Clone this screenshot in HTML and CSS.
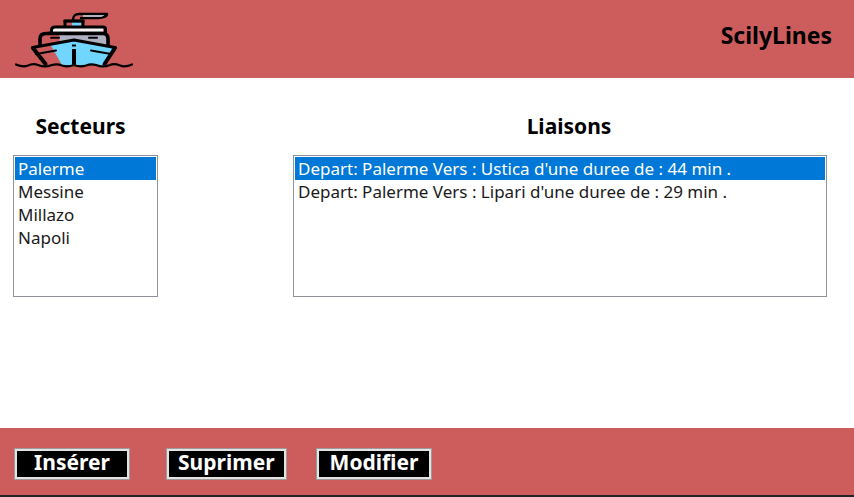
FILE: index.html
```html
<!DOCTYPE html>
<html lang="fr">
<head>
<meta charset="utf-8">
<title>ScilyLines</title>
<link rel="stylesheet" href="styles.css">
</head>
<body>
<header class="banner">
  <svg class="logo" viewBox="0 0 120 58" aria-hidden="true">
    <path fill="#b0b1c2" d="M45 22H90Q94 22 94 26V35L60 28 46 31Z"/>
    <path fill="#f5f3f5" d="M39 15H89V20H39Z"/>
    <path fill="#70d6ff" d="M58 9H67V14H58ZM60 28L100 35 90 53H48L36 32Z"/>
    <path fill="#f2effa" d="M69 3H92Q90 6 81 6H69Z"/>
    <g fill="none" stroke="#000" stroke-linejoin="round">
      <path stroke-width="2.4" stroke-linecap="round" d="M59 8Q59 2 65 2H93Q93 4 90 5Q88 6 84 6H67"/>
      <path stroke-width="3" d="M51 15V9H69V15"/>
      <path stroke-width="2.6" d="M49.5 9H70.5"/>
      <path stroke-width="3" d="M37.500 21V18Q37.500 15 41 15H89Q91.500 15 91.500 17V21"/>
      <path stroke-width="2.4" d="M34 21H93"/>
      <path stroke-width="3.6" d="M26 34V27Q26 21.500 32 21.500H89Q94 21.500 94 27V34"/>
      <path stroke-width="3" stroke-linecap="round" d="M18.500 35.500L60 28 101 35.500"/>
      <path stroke-width="4" stroke-linecap="round" d="M19 36L31.500 52M101 36L90.500 52"/>
      <path stroke-width="4" d="M60 37V53M60 32.500V34.500"/>
      <path stroke-width="2" stroke-linecap="round" d="M22 42L42 38.500M77 38.500L97 42M37 25.800H45M75 25.800H83"/>
      <path stroke-width="2.2" stroke-linecap="round" d="M2 52.500Q9 55.500 14 53.500Q19 51 24 53Q31 56 38 53Q43 51.500 48 53.500Q54 55.500 60 53Q66 55.500 72 53.500Q77 51.500 82 53Q89 56 96 53Q100 51 106 53.500Q111 55.500 118 52.500"/>
    </g>
  </svg>
  <h1 class="brand">ScilyLines</h1>
</header>
<main class="content">
  <div class="field">
    <label class="title title-sectors" for="secteurs">Secteurs</label>
    <select class="list" id="secteurs" size="6">
      <option selected>Palerme</option>
      <option>Messine</option>
      <option>Millazo</option>
      <option>Napoli</option>
    </select>
  </div>
  <div class="field">
    <label class="title title-links" for="liaisons">Liaisons</label>
    <select class="list" id="liaisons" size="6">
      <option selected>Depart: Palerme Vers : Ustica d'une duree de : 44 min .</option>
      <option>Depart: Palerme Vers : Lipari d'une duree de : 29 min .</option>
    </select>
  </div>
</main>
<footer class="actions">
  <button class="action" type="button">Insérer</button>
  <button class="action" type="button">Suprimer</button>
  <button class="action" type="button">Modifier</button>
</footer>
</body>
</html>
```
FILE: styles.css
```css
* {
  box-sizing: border-box;
}

body {
  margin: 0;
  min-height: 100vh;
  display: flex;
  flex-direction: column;
  background: #fff;
  color: #000;
  font-family: "Noto Sans", "Open Sans", sans-serif;
}

.banner {
  display: flex;
  justify-content: space-between;
  align-items: flex-start;
  padding: 12px 22px 8px 14px;
  background: #cd5c5c;
}

.logo {
  width: 120px;
  height: 58px;
}

.brand {
  margin: 8px 0 0;
  font-size: 23px;
  line-height: 30px;
}

.content {
  flex: 1;
  display: grid;
  grid-template-columns: 145px 1fr;
  gap: 135px;
  align-items: start;
  padding: 34px 27px 0 13px;
}

.field {
  display: flex;
  flex-direction: column;
  gap: 15px;
}

.title {
  font-size: 21px;
  font-weight: 700;
  line-height: 28px;
  text-align: center;
}

.title-sectors {
  padding-right: 10px;
}

.title-links {
  padding-left: 18px;
}

.list {
  width: 100%;
  height: 142px;
  margin: 0;
  padding: 1px;
  border: 1px solid #8f929c;
  border-radius: 0;
  outline: 0;
  overflow: hidden;
  background: #fff;
  color: #1a1a1a;
  font-family: inherit;
  font-size: 17px;
}

.list option {
  min-height: 23px;
  padding: 0 3px;
}

.list option:checked {
  background: #0078d7 linear-gradient(#0078d7, #0078d7);
  color: #fff;
}

.actions {
  display: grid;
  grid-template-columns: 152px 150px auto;
  justify-items: start;
  padding: 20px 14px 15px;
  background: #cd5c5c;
  border-bottom: 2px solid #242428;
}

.action {
  min-width: 116px;
  height: 32px;
  padding: 0 9px 3px;
  border: 3px solid #e3e3e3;
  outline: 1px solid #a09a9a;
  outline-offset: -1px;
  border-radius: 0;
  background: #000;
  color: #fff;
  font-family: inherit;
  font-size: 21px;
  font-weight: 700;
  line-height: 23px;
}
```
